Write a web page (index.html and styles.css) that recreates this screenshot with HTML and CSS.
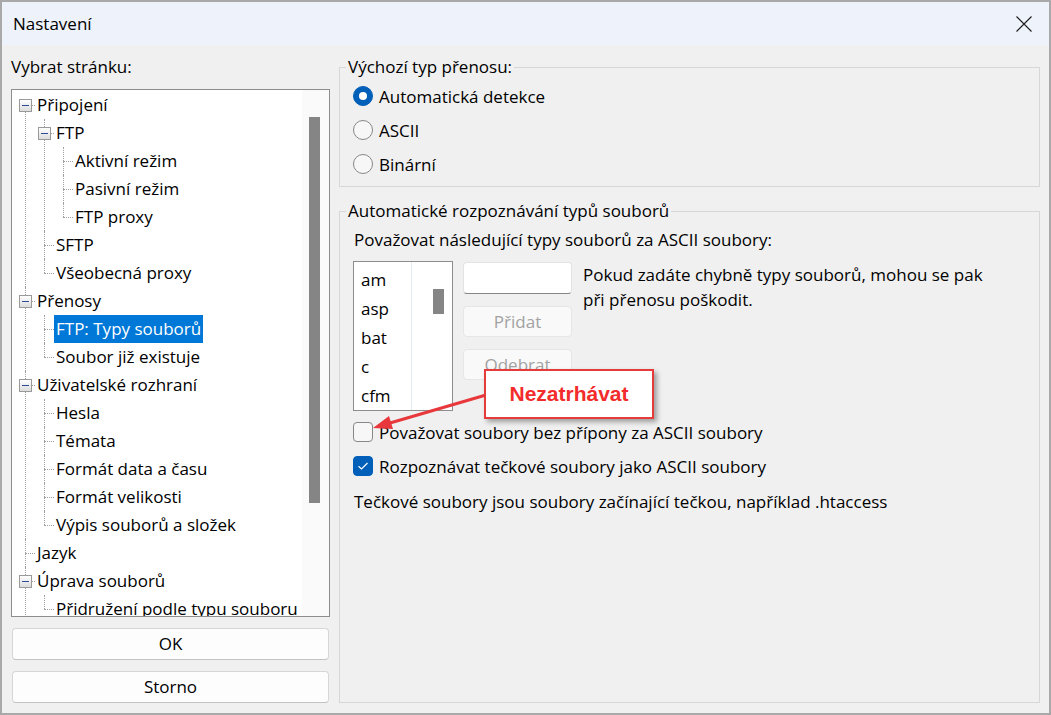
FILE: index.html
```html
<!DOCTYPE html>
<html lang="cs">
<head>
<meta charset="utf-8">
<title>Nastavení</title>
<link rel="stylesheet" href="styles.css">
</head>
<body>
<div class="window">
  <div class="titlebar">
    <span class="title">Nastavení</span>
    <svg class="close" width="16" height="16" viewBox="0 0 16 16"><path d="M0.5 0.5 L15.5 15.5 M15.5 0.5 L0.5 15.5" stroke="#1a1a1a" stroke-width="1.1" fill="none"/></svg>
  </div>
  <div class="main">
    <div class="left">
      <div class="caption">Vybrat stránku:</div>
      <div class="tree">
        <div class="tree-list">
          <ul>
            <li><span class="exp"></span><div class="row"><span class="lbl">Připojení</span></div>
              <ul>
                <li><span class="exp"></span><div class="row"><span class="lbl">FTP</span></div>
                  <ul>
                    <li><div class="row"><span class="lbl">Aktivní režim</span></div></li>
                    <li><div class="row"><span class="lbl">Pasivní režim</span></div></li>
                    <li class="last"><div class="row"><span class="lbl">FTP proxy</span></div></li>
                  </ul>
                </li>
                <li><div class="row"><span class="lbl">SFTP</span></div></li>
                <li class="last"><div class="row"><span class="lbl">Všeobecná proxy</span></div></li>
              </ul>
            </li>
            <li><span class="exp"></span><div class="row"><span class="lbl">Přenosy</span></div>
              <ul>
                <li><div class="row"><span class="lbl sel">FTP: Typy souborů</span></div></li>
                <li class="last"><div class="row"><span class="lbl">Soubor již existuje</span></div></li>
              </ul>
            </li>
            <li><span class="exp"></span><div class="row"><span class="lbl">Uživatelské rozhraní</span></div>
              <ul>
                <li><div class="row"><span class="lbl">Hesla</span></div></li>
                <li><div class="row"><span class="lbl">Témata</span></div></li>
                <li><div class="row"><span class="lbl">Formát data a času</span></div></li>
                <li><div class="row"><span class="lbl">Formát velikosti</span></div></li>
                <li class="last"><div class="row"><span class="lbl">Výpis souborů a složek</span></div></li>
              </ul>
            </li>
            <li><div class="row"><span class="lbl">Jazyk</span></div></li>
            <li><span class="exp"></span><div class="row"><span class="lbl">Úprava souborů</span></div>
              <ul>
                <li class="last"><div class="row"><span class="lbl">Přidružení podle typu souboru</span></div></li>
              </ul>
            </li>
          </ul>
        </div>
        <div class="tree-scroll"><div class="tree-thumb"></div></div>
      </div>
      <button class="btn">OK</button>
      <button class="btn">Storno</button>
    </div>
    <div class="right">
      <fieldset class="group g1">
        <legend>Výchozí typ přenosu:</legend>
        <div class="opt"><span class="radio on"></span><span>Automatická detekce</span></div>
        <div class="opt"><span class="radio"></span><span>ASCII</span></div>
        <div class="opt"><span class="radio"></span><span>Binární</span></div>
      </fieldset>
      <fieldset class="group g2">
        <legend>Automatické rozpoznávání typů souborů</legend>
        <div class="text t-first">Považovat následující typy souborů za ASCII soubory:</div>
        <div class="types">
          <div class="listbox">
            <div class="items">
              <div class="item">am</div>
              <div class="item">asp</div>
              <div class="item">bat</div>
              <div class="item">c</div>
              <div class="item">cfm</div>
            </div>
            <div class="lb-gap"></div>
            <div class="lb-scroll"><div class="lb-thumb"></div></div>
          </div>
          <div class="edits">
            <div class="textbox"></div>
            <button class="btn2" disabled>Přidat</button>
            <button class="btn2" disabled>Odebrat</button>
          </div>
          <div class="hint">Pokud zadáte chybně typy souborů, mohou se pak<br>při přenosu poškodit.</div>
        </div>
        <div class="opt chk1"><span class="check"></span><span>Považovat soubory bez přípony za ASCII soubory</span></div>
        <div class="opt chk2"><span class="check on"><svg width="12" height="10" viewBox="0 0 12 10"><path d="M1.5 5.2 L4.5 8 L10.5 2" stroke="#fff" stroke-width="1.2" fill="none"/></svg></span><span>Rozpoznávat tečkové soubory jako ASCII soubory</span></div>
        <div class="text t-last">Tečkové soubory jsou soubory začínající tečkou, například .htaccess</div>
      </fieldset>
    </div>
  </div>
  <svg class="arrow" width="130" height="60" viewBox="0 0 130 60">
    <line x1="124" y1="13" x2="28" y2="41" stroke="#e8383c" stroke-width="3"/>
    <polygon points="11,46 31,47 27,34" fill="#e8383c"/>
  </svg>
  <div class="callout">Nezatrhávat</div>
</div>
</body>
</html>
```

FILE: styles.css
```css
* { box-sizing: border-box; }
html, body { margin: 0; padding: 0; }
body {
  font-family: "Open Sans", "Noto Sans", sans-serif;
  font-size: 17px;
  color: #000;
  background: #f0f0f0;
}
.window {
  position: relative;
  width: 1051px;
  height: 715px;
  border: 2px solid #a9a9a9;
  background: #f0f0f0;
  display: flex;
  flex-direction: column;
  overflow: hidden;
}
.titlebar {
  height: 43px;
  flex: none;
  background: #eef2fa;
  display: flex;
  align-items: center;
  justify-content: space-between;
  padding: 0 17px 0 11px;
}
.title { line-height: 24px; }
.close { display: block; margin-top: 1px; }

.main {
  flex: 1;
  display: flex;
  gap: 9px;
  padding: 10px 9px;
  min-height: 0;
}
.left {
  width: 319px;
  flex: none;
  display: flex;
  flex-direction: column;
}
.caption { line-height: 24px; margin-bottom: 10px; }
.tree {
  flex: 1;
  min-height: 0;
  border: 1px solid #8d8d8d;
  background: #fff;
  display: flex;
  overflow: hidden;
}
.tree-list { flex: 1; padding-top: 1px; overflow: hidden; }
.tree-scroll { width: 27px; flex: none; background: #fafafa; padding: 27px 0 0 7px; }
.tree-thumb { width: 11px; height: 386px; background: #858585; }

.tree ul { list-style: none; margin: 0; padding: 0; }
.tree ul ul { padding-left: 19px; }
.tree li { position: relative; }
.tree li::before {
  content: "";
  position: absolute;
  left: 13px;
  top: 14px;
  width: 10px;
  border-top: 1px dotted #a0a0a0;
}
.tree li::after {
  content: "";
  position: absolute;
  left: 13px;
  top: 0;
  bottom: 0;
  border-left: 1px dotted #a0a0a0;
}
.tree li.last::after { bottom: auto; height: 14px; }
.tree-list > ul > li:first-child::after { top: 14px; }
.row {
  height: 28px;
  line-height: 28px;
  padding-left: 25px;
  white-space: nowrap;
}
.lbl { padding: 0 2px; margin-left: -2px; display: inline-block; height: 28px; }
.lbl.sel { background: #0078d7; color: #fff; }
.exp {
  position: absolute;
  left: 7px;
  top: 8px;
  width: 13px;
  height: 13px;
  border: 1px solid #9a9a9a;
  background: linear-gradient(#ffffff, #dcdcdc);
  z-index: 1;
}
.exp::after {
  content: "";
  position: absolute;
  left: 2px;
  top: 5px;
  width: 7px;
  height: 1px;
  background: #2c4a96;
}

.btn {
  font: inherit;
  color: #000;
  height: 32px;
  margin: 11px 1px 0;
  background: #fdfdfd;
  border: 1px solid #d6d6d6;
  border-bottom-color: #c2c2c2;
  border-radius: 4px;
  line-height: 28px;
  padding: 0;
}

.right {
  flex: 1;
  display: flex;
  flex-direction: column;
}
.group {
  margin: 0;
  padding: 0 13px;
  border: 1px solid #d7d7d7;
  min-width: 0;
}
.group legend {
  line-height: 24px;
  padding: 0 2px;
  margin-left: -7px;
}
.g1 { padding-bottom: 5px; }
.g2 { flex: 1; margin-top: 12px; }

.opt {
  display: flex;
  align-items: center;
  height: 34px;
  gap: 6px;
  white-space: nowrap;
}
.radio {
  width: 20px;
  height: 20px;
  flex: none;
  border-radius: 50%;
  border: 1px solid #878787;
  background: #f7f7f7;
  display: flex;
  align-items: center;
  justify-content: center;
}
.radio.on { background: #005fb8; border-color: #005fb8; }
.radio.on::after {
  content: "";
  width: 8px;
  height: 8px;
  border-radius: 50%;
  background: #fff;
}
.check {
  width: 20px;
  height: 20px;
  flex: none;
  border-radius: 4px;
  border: 1px solid #878787;
  background: #f7f7f7;
  display: flex;
  align-items: center;
  justify-content: center;
}
.check.on { background: #005fb8; border-color: #005fb8; }
.check svg { display: block; }

.text { line-height: 24px; padding-left: 1px; white-space: nowrap; }
.t-first { margin-top: 5px; }
.types { display: flex; margin-top: 9px; }
.listbox {
  width: 100px;
  height: 150px;
  flex: none;
  border: 1px solid #8d8d8d;
  background: #fff;
  display: flex;
}
.items { width: 58px; border-right: 1px solid #e3ebf3; padding: 3px 0 0 7px; }
.item { line-height: 29px; height: 29px; }
.lb-gap { width: 14px; }
.lb-scroll { width: 26px; padding: 27px 0 0 7px; background: #fff; }
.lb-thumb { width: 11px; height: 25px; background: #858585; }
.edits {
  width: 109px;
  margin-left: 10px;
  display: flex;
  flex-direction: column;
}
.textbox {
  margin-top: 1px;
  height: 32px;
  background: #fff;
  border: 1px solid #e3e3e3;
  border-bottom: 1px solid #868686;
  border-radius: 4px;
}
.btn2 {
  font: inherit;
  margin-top: 12px;
  height: 31px;
  padding: 0;
  background: #f9f9f9;
  border: 1px solid #e6e6e6;
  border-radius: 4px;
  color: #a2a2a2;
}
.hint { margin-left: 11px; margin-top: 1px; line-height: 25px; white-space: nowrap; }
.chk1 { height: 24px; margin-top: 9px; }
.chk2 { height: 24px; margin-top: 10px; }
.t-last { margin-top: 12px; }

.callout {
  position: absolute;
  left: 482px;
  top: 367px;
  width: 170px;
  height: 50px;
  border: 2px solid #e53b3b;
  background: #fff;
  box-shadow: 3px 3px 5px rgba(0, 0, 0, 0.35);
  font-family: "Liberation Sans", Arial, sans-serif;
  font-weight: bold;
  font-size: 21px;
  color: #f22b2b;
  display: flex;
  align-items: center;
  justify-content: center;
}
.arrow {
  position: absolute;
  left: 360px;
  top: 380px;
}
```
